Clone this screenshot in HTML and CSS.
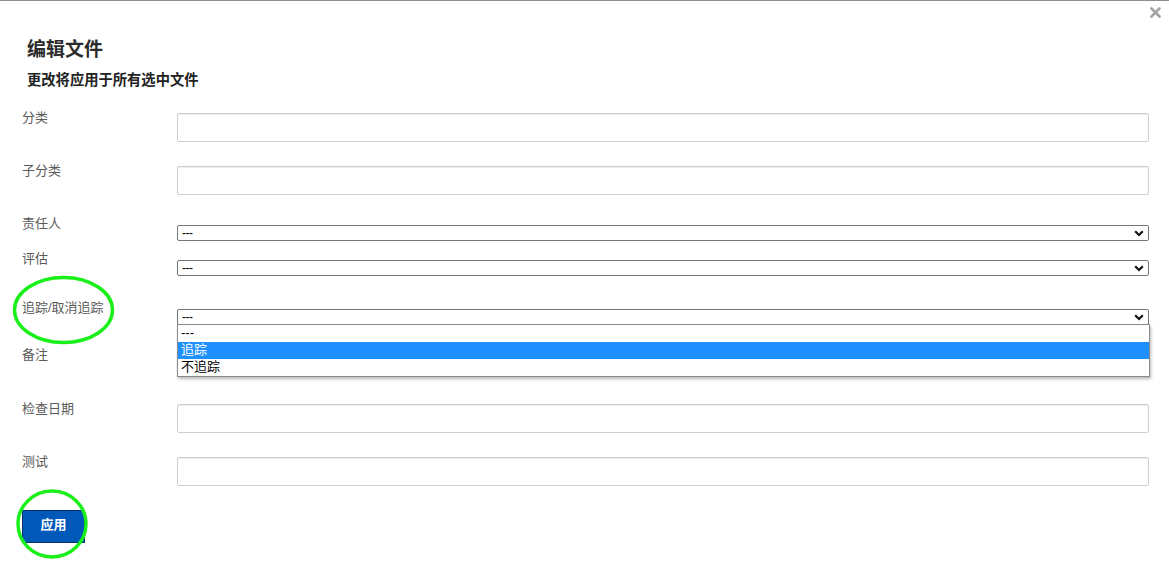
FILE: index.html
```html
<!DOCTYPE html>
<html lang="zh-CN">
<head>
<meta charset="utf-8">
<title>编辑文件</title>
<link rel="stylesheet" href="styles.css">
</head>
<body>
<div class="modal">
  <button class="close" aria-label="关闭">
    <svg width="11" height="11" viewBox="0 0 11 11"><path d="M1.5 1.5 L9.5 9.5 M9.5 1.5 L1.5 9.5" stroke="#a3a3a3" stroke-width="2.6" stroke-linecap="round"/></svg>
  </button>
  <div class="header">
    <h2 class="title">编辑文件</h2>
    <p class="subtitle">更改将应用于所有选中文件</p>
  </div>
  <form class="form">
    <div class="row row-text r1">
      <label class="label">分类</label>
      <input class="field input" type="text">
    </div>
    <div class="row row-text r2">
      <label class="label">子分类</label>
      <input class="field input" type="text">
    </div>
    <div class="row row-select r3">
      <label class="label">责任人</label>
      <div class="field select"><span>---</span>
        <svg class="chev" width="10" height="7" viewBox="0 0 10 7"><path d="M1.2 1.3 L5 5 L8.8 1.3" fill="none" stroke="#111" stroke-width="2.2"/></svg>
      </div>
    </div>
    <div class="row row-select r4">
      <label class="label">评估</label>
      <div class="field select"><span>---</span>
        <svg class="chev" width="10" height="7" viewBox="0 0 10 7"><path d="M1.2 1.3 L5 5 L8.8 1.3" fill="none" stroke="#111" stroke-width="2.2"/></svg>
      </div>
    </div>
    <div class="row row-select r5">
      <label class="label">追踪/取消追踪</label>
      <div class="field select open"><span>---</span>
        <svg class="chev" width="10" height="7" viewBox="0 0 10 7"><path d="M1.2 1.3 L5 5 L8.8 1.3" fill="none" stroke="#111" stroke-width="2.2"/></svg>
        <ul class="dropdown">
          <li class="opt">---</li>
          <li class="opt selected">追踪</li>
          <li class="opt">不追踪</li>
        </ul>
      </div>
    </div>
    <div class="row row-text r6">
      <label class="label">备注</label>
      <input class="field input short" type="text">
    </div>
    <div class="row row-text r7">
      <label class="label">检查日期</label>
      <input class="field input" type="text">
    </div>
    <div class="row row-text r8">
      <label class="label">测试</label>
      <input class="field input" type="text">
    </div>
    <button type="button" class="apply">应用</button>
  </form>
  <svg class="annot" width="1169" height="567" viewBox="0 0 1169 567">
    <ellipse cx="63.5" cy="310" rx="49" ry="32.5" fill="none" stroke="#19f019" stroke-width="3.4"/>
    <ellipse cx="52" cy="524" rx="34" ry="33" fill="none" stroke="#19f019" stroke-width="3.4"/>
  </svg>
</div>
</body>
</html>
```
FILE: styles.css
```css
html, body {
  margin: 0;
  padding: 0;
  background: #fff;
}
body {
  font-family: "Liberation Sans", "Noto Sans CJK SC", sans-serif;
  color: #333;
}
.modal {
  position: relative;
  height: 566px;
  border-top: 1px solid #8e8e8e;
  overflow: hidden;
}
.close {
  position: absolute;
  top: 6px;
  right: 8px;
  padding: 0;
  margin: 0;
  border: 0;
  background: none;
  width: 11px;
  height: 11px;
  display: block;
}
.close svg { display: block; }
.header {
  padding: 37px 0 0 27px;
}
.title {
  margin: 0;
  font-size: 19px;
  line-height: 24px;
  font-weight: bold;
  color: #2b2b2b;
}
.subtitle {
  margin: 9px 0 0;
  font-size: 14.3px;
  line-height: 18px;
  font-weight: bold;
  color: #222;
}
.form {
  padding: 20px 20px 0 22px;
  display: flex;
  flex-direction: column;
  align-items: stretch;
}
.row {
  display: flex;
  align-items: flex-start;
}
.label {
  flex: none;
  width: 155px;
  font-size: 13px;
  line-height: 18px;
  color: #5a5a5a;
}
.field {
  flex: 1;
  box-sizing: border-box;
  margin: 0;
}
.input {
  height: 29px;
  margin-top: 4px;
  border: 1px solid #cfcfcf;
  border-radius: 2px;
  box-shadow: inset 0 1px 1px rgba(0,0,0,.07);
  background: #fff;
  font: inherit;
}
.input.short { height: 27px; }
.select {
  position: relative;
  height: 16px;
  margin-top: 10px;
  border: 1px solid #767676;
  border-radius: 2px;
  background: #fff;
  font-size: 12px;
  line-height: 14px;
  color: #000;
  padding-left: 4px;
}
.select span {
  display: block;
  letter-spacing: -0.5px;
}
.chev {
  position: absolute;
  right: 4px;
  top: 4px;
}
.dropdown {
  position: absolute;
  left: -1px;
  right: -2px;
  top: 14px;
  margin: 0;
  padding: 0;
  list-style: none;
  background: #fff;
  border: 1px solid #8a8a8a;
  box-shadow: 1px 2px 3px rgba(0,0,0,.28);
  z-index: 5;
}
.opt {
  height: 17px;
  line-height: 16px;
  padding-left: 3px;
  font-size: 13px;
  color: #000;
}
.opt.selected {
  background: #1e90ff;
  color: #fff;
}
.r2 { margin-top: 20px; }
.r3 { margin-top: 20px; }
.r4 { margin-top: 9px; }
.r5 { margin-top: 23px; }
.r6 { margin-top: 21px; }
.r7 { margin-top: 23px; }
.r8 { margin-top: 20px; }
.apply {
  align-self: flex-start;
  margin-top: 24px;
  width: 63px;
  height: 33px;
  box-sizing: border-box;
  border: 1px solid #0a2f6b;
  background: #0058b9;
  color: #fff;
  font-family: "Liberation Sans", "Noto Sans CJK SC", sans-serif;
  font-size: 13px;
  font-weight: bold;
  line-height: 16px;
  padding: 0 0 4px;
}
.annot {
  position: absolute;
  left: 0;
  top: -1px;
  pointer-events: none;
  z-index: 10;
}
```
